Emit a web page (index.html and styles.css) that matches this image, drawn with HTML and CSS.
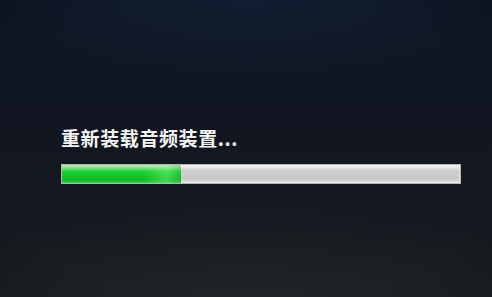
FILE: index.html
```html
<!DOCTYPE html>
<html lang="zh-CN">
<head>
<meta charset="utf-8">
<title>重新装载音频装置</title>
<link rel="stylesheet" href="styles.css">
</head>
<body>
<main class="screen">
  <div class="loader">
    <p class="status">重新装载音频装置...</p>
    <div class="track">
      <div class="fill" style="width: 119px"></div>
    </div>
  </div>
</main>
</body>
</html>
```
FILE: styles.css
```css
html, body {
  margin: 0;
  padding: 0;
  width: 492px;
  height: 297px;
  overflow: hidden;
}

.screen {
  width: 492px;
  height: 297px;
  box-sizing: border-box;
  padding: 126px 0 0 61px;
  background:
    radial-gradient(ellipse 240px 80px at 250px 0px, rgba(18, 38, 62, 0.45), rgba(18, 38, 62, 0) 100%),
    radial-gradient(ellipse 300px 110px at 250px 310px, rgba(40, 42, 46, 0.5), rgba(40, 42, 46, 0) 100%),
    radial-gradient(ellipse 420px 260px at 246px 150px, rgba(0,0,0,0) 60%, rgba(0,0,0,0.25) 100%),
    linear-gradient(to bottom, #0f1726 0%, #111621 45%, #15191f 75%, #1b1e23 100%);
  font-family: "Noto Sans CJK SC", "Microsoft YaHei", sans-serif;
}

.loader {
  display: flex;
  flex-direction: column;
  gap: 14px;
  width: 400px;
}

.status {
  margin: 0;
  color: #f4f4f4;
  font-size: 19px;
  line-height: 24px;
  font-weight: 700;
  letter-spacing: 0.6px;
}

.track {
  height: 20px;
  box-sizing: border-box;
  border: 1px solid #b5b5b5;
  background: linear-gradient(to bottom, #f2f2f2 0%, #e4e4e4 15%, #cfcfcf 30%, #c9c9c9 75%, #d6d6d6 90%, #e6e6e6 100%);
  display: flex;
  box-shadow: inset 0 0 0 1px rgba(255,255,255,0.35);
}

.fill {
  height: 100%;
  background:
    linear-gradient(to right, rgba(255,255,255,0) 0%, rgba(255,255,255,0) 70%, rgba(150,255,150,0.35) 88%, rgba(40,180,60,0.25) 100%),
    linear-gradient(to bottom, #b4efb4 0%, #8ee08e 15%, #22d23a 35%, #0ec52a 65%, #14b82c 85%, #3ccc50 100%);
}
```
